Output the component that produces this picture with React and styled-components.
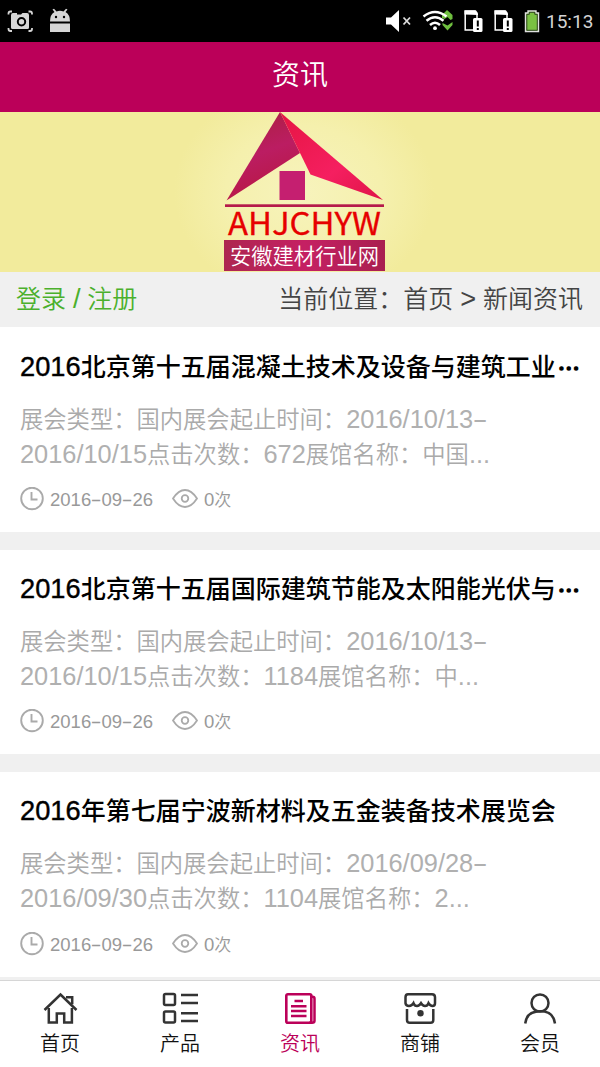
import React from "react";
import styled, { createGlobalStyle } from "styled-components";

const BRAND = "#bb0059";

const GlobalStyle = createGlobalStyle`
  * { box-sizing: border-box; }
  body {
    margin: 0;
    background: #f0f0f0;
    font-family: "Noto Sans CJK SC", sans-serif;
    font-weight: 350;
    color: #000;
  }
`;

const Screen = styled.div`
  width: 600px;
  height: 1067px;
  display: flex;
  flex-direction: column;
  overflow: hidden;
`;

const StatusBar = styled.div`
  height: 42px;
  flex: none;
  background: #000;
  display: flex;
  justify-content: space-between;
  svg { display: block; }
`;

const StatusRight = styled.div`
  display: flex;
`;

const Clock = styled.div`
  width: 54px;
  line-height: 43px;
  font-family: Roboto, sans-serif;
  font-weight: 400;
  font-size: 19px;
  color: #d4d4d4;
  white-space: nowrap;
`;

const Header = styled.header`
  height: 70px;
  flex: none;
  background: ${BRAND};
  color: #fff;
  font-size: 28px;
  line-height: 62px;
  text-align: center;
`;

const Banner = styled.div`
  height: 160px;
  flex: none;
  display: flex;
  justify-content: center;
  padding-left: 8px;
  background: radial-gradient(ellipse 130px 110px at 304px 80px, #f7f3bc 0%, #f5f0ad 60%, #f2eb9c 100%);
  svg { display: block; }
`;

const Crumbs = styled.div`
  height: 55px;
  flex: none;
  display: flex;
  justify-content: space-between;
  padding: 0 17px 0 16px;
  font-size: 25px;
  line-height: 51px;
  word-spacing: 1.3px;
  color: #444;
  white-space: nowrap;
`;

const Login = styled.a`
  color: #4bb02c;
`;

const List = styled.main`
  flex: 1;
  min-height: 0;
  overflow: hidden;
  display: flex;
  flex-direction: column;
  gap: 18px;
`;

const Card = styled.article`
  flex: none;
  height: ${(p) => p.$height}px;
  padding: ${(p) => p.$top}px 20px 0;
  background: #fff;
`;

const Title = styled.h2`
  margin: 0;
  height: 40px;
  line-height: 40px;
  font-size: 25px;
  font-weight: 500;
  white-space: nowrap;
`;

const Ellipsis = styled.span`
  font-size: 22px;
  line-height: 1;
  margin-left: 2px;
  -webkit-text-stroke: 1.3px #000;
`;

const Summary = styled.p`
  margin: 16px 0 0;
  font-size: 23.3px;
  line-height: 35px;
  height: 70px;
  color: #aaa;
  white-space: nowrap;
`;

const Line = styled.span`
  display: block;
  height: 35px;
`;

const Latin = styled.span`
  font-family: "Liberation Sans", sans-serif;
  font-weight: 400;
  font-size: 1.09em;
  line-height: 1;
  ${Title} & { -webkit-text-stroke: 0.4px #000; }
  ${Summary} & { color: #b0b0b0; }
`;

const Dash = styled.span`
  display: inline-block;
  width: 0.556em;
  text-align: center;
  transform: scaleX(1.8);
`;

const Meta = styled.div`
  margin-top: ${(p) => p.$gap}px;
  display: flex;
  align-items: center;
  height: 26px;
  font-size: 17px;
  line-height: 26px;
  color: #999;
  svg { flex: none; display: block; }
`;

const MetaText = styled.span`
  margin: 0 19px 0 6px;
  white-space: nowrap;
`;

const TabBar = styled.nav`
  height: 87px;
  flex: none;
  display: grid;
  grid-template-columns: repeat(5, 1fr);
  background: #fff;
  border-top: 1px solid #d6d6d6;
`;

const Tab = styled.a`
  display: flex;
  flex-direction: column;
  align-items: center;
  padding-top: 10px;
  font-size: 20px;
  line-height: 31px;
  color: ${(p) => (p.$active ? BRAND : "#111")};
  svg { display: block; color: ${(p) => (p.$active ? BRAND : "#333")}; }
`;

/* Sets digits and punctuation in the Latin face and widens hyphens. */
function Mixed({ children }) {
  return children.split(/([0-9/.>\-]+|⋯)/).map((run, i) => {
    if (i % 2 === 0) return run;
    if (run === "⋯") return <Ellipsis key={i}>⋯</Ellipsis>;
    return (
      <Latin key={i}>
        {run.split(/(-)/).map((t, j) => (t === "-" ? <Dash key={j}>-</Dash> : t))}
      </Latin>
    );
  });
}

const StatusLeftIcons = () => (
  <svg width="80" height="42" viewBox="0 0 80 42">
    <g fill="none" stroke="#d6d6d6" strokeWidth="1.8">
      <path d="M8.500 14.500v-1q0-2 2-2h1.500M28.500 11.500h1.500q2 0 2 2v1M32 28v1q0 2-2 2h-1.500M12 31h-1.500q-2 0-2-2v-1" />
    </g>
    <path fill="#d6d6d6" d="M13 13h4v1.500h4l1.500-1.500h4.500q2 0 2 2v12.500q0 1.500-1.500 1.500h-15q-1.500 0-1.500-1.500v-12.500q0-2 2-2z" />
    <circle cx="21.500" cy="21.700" r="3.700" fill="#d6d6d6" stroke="#000" strokeWidth="2" />
    <path fill="#d6d6d6" d="M50 23.500v8.500h20v-8.500zM50 21.500q0-7 4.500-9.500l-2-2.500 1.500-.8 2.500 2.700q3.500-1.500 7 0l2.500-2.700 1.500.8-2 2.500q4.500 2.500 4.500 9.500z" />
    <circle cx="56" cy="17" r="1.200" fill="#000" />
    <circle cx="64" cy="17" r="1.200" fill="#000" />
  </svg>
);

const Sim = ({ x }) => (
  <g transform={`translate(${x} 0)`}>
    <path d="M13 18v-5l-1.500-2H1.200v19H9" fill="none" stroke="#fff" strokeWidth="1.500" />
    <path d="M.5 14.500v-4H11l3 3.500v1z" fill="#fff" />
    <rect x="9" y="18" width="9.500" height="14" rx="1.500" fill="#fff" />
    <path d="M13.800 20.500v6M13.800 28v2" stroke="#000" strokeWidth="2" />
  </g>
);

const StatusRightIcons = () => (
  <svg width="161" height="42" viewBox="385 0 161 42">
    <path d="M386 17.500h5l8-7.500v22l-8-7.500h-5z" fill="#fff" />
    <path d="M403.500 17.500l6.500 7M410 17.500l-6.500 7" stroke="#ddd" strokeWidth="1.800" />
    <path d="M442 18v-3l5-5 5.500 5v4l-2 1-3-3-3 2zM442.500 23l5 2.500 5-3.500v3l-5 5.500-5-5.500z" fill="#6fbf3f" />
    <g fill="none" stroke="#fff" strokeWidth="2.500">
      <path d="M423.500 16.500q11.500-9 23 0M426.500 20.800q8.500-7 17 0M430 25q5-4.500 10 0" />
    </g>
    <circle cx="435" cy="28.200" r="1.900" fill="#fff" />
    <Sim x={464} />
    <Sim x={494} />
    <path d="M525.500 13h2.500v-2h8v2h2.500v18.500h-13z" fill="#7ac142" stroke="#e0e0e0" strokeWidth="1.400" />
    <path d="M526.800 14.300h2.500v-2h5.500v2h2.500v16h-10.500z" fill="none" stroke="#111" strokeWidth=".7" />
  </svg>
);

const Logo = () => (
  <svg width="164" height="160" viewBox="222 112 164 160">
    <defs>
      <linearGradient id="roof" x1="0" y1="0" x2=".3" y2="1">
        <stop offset="0" stopColor="#a8203a" />
        <stop offset=".55" stopColor="#bb1d62" />
        <stop offset="1" stopColor="#b81745" />
      </linearGradient>
      <linearGradient id="plate" x1="0" y1="0" x2="1" y2="0">
        <stop offset="0" stopColor="#ad2650" />
        <stop offset=".5" stopColor="#c52063" />
        <stop offset="1" stopColor="#a91f50" />
      </linearGradient>
      <linearGradient id="wing" x1="0" y1="0" x2="1" y2="1">
        <stop offset="0" stopColor="#e61543" />
        <stop offset=".6" stopColor="#f51f60" />
        <stop offset="1" stopColor="#df1447" />
      </linearGradient>
    </defs>
    <path d="M280 112L226.500 200.500 300 153z" fill="url(#roof)" />
    <path d="M280 112L383 200 310.500 174.500z" fill="url(#wing)" />
    <rect x="279.500" y="171" width="25.500" height="29" fill="#c51f70" />
    <rect x="225" y="204.300" width="159" height="2.700" fill="#b51a4b" />
    <text x="228" y="234.800" textLength="153" lengthAdjust="spacingAndGlyphs" fontFamily="Noto Sans CJK SC, sans-serif" fontWeight="400" fontSize="31" fill="#e60000" stroke="#e60000" strokeWidth=".3">AHJCHYW</text>
    <rect x="224" y="240" width="161" height="31" fill="url(#plate)" />
    <text x="230" y="263.500" textLength="149" lengthAdjust="spacingAndGlyphs" fontFamily="Noto Sans CJK SC, sans-serif" fontWeight="350" fontSize="21.300" fill="#fff">安徽建材行业网</text>
  </svg>
);

const ClockIcon = () => (
  <svg width="24" height="24" viewBox="0 0 24 24" fill="none" stroke="#aaa">
    <circle cx="12" cy="11.500" r="10.800" strokeWidth="1.900" />
    <path d="M11.500 5v7.500h6" strokeWidth="1.900" />
  </svg>
);

const EyeIcon = () => (
  <svg width="26" height="24" viewBox="0 0 26 24" fill="none" stroke="#aaa" strokeWidth="1.800">
    <path d="M1 11.500Q6.500 3 13 3T25 11.500Q19.500 20 13 20T1 11.500z" />
    <circle cx="13" cy="11.500" r="3.300" />
  </svg>
);

const icons = {
  home: (
    <>
      <path d="M2.500 19L18.500 3.500 34.500 19" />
      <path d="M24 6.300h6.200v7" />
      <path d="M6.800 17v14.500h8v-9h7.400v9h7.700V17" />
    </>
  ),
  grid: (
    <>
      <rect x="2" y="3" width="11" height="11" rx="1.500" />
      <rect x="2" y="20.500" width="11" height="11" rx="1.500" />
      <path d="M19 4h17M19 12h17M19 22.300h17M19 30h17" />
    </>
  ),
  news: (
    <>
      <rect x="4.300" y="3.300" width="25" height="28.500" rx="1.500" strokeWidth="2.600" />
      <path d="M29 5.800h1.500q2 0 2 2v22q0 2-2.500 2h-3" />
      <path d="M12.500 10h8.500M9 15.200h15.500M9 20h15.500M9 25h15.500" />
    </>
  ),
  shop: (
    <>
      <path d="M6 3.200h24q3 0 3 3v6q0 2.700-2.500 2.700t-4-2.700q-1 2.700-3.500 2.700t-4-2.700q-1.500 2.700-4 2.700t-3.500-2.700q-1.500 2.700-4.500 2.700t-3.500-2.700v-6q0-3 2.500-3z" />
      <path d="M5 18v11q0 2.800 2.800 2.800h20.700q2.800 0 2.800-2.800V18" />
      <circle cx="18.500" cy="22.200" r="3.200" fill="currentColor" stroke="none" />
    </>
  ),
  user: (
    <>
      <circle cx="18" cy="12" r="8.500" />
      <path d="M3.200 32.500Q4.500 20.500 18 20.300T33 32.500" />
    </>
  ),
};

const TabIcon = ({ name }) => (
  <svg width="36" height="36" viewBox="0 0 36 36" fill="none" stroke="currentColor" strokeWidth="2.500">
    {icons[name]}
  </svg>
);

const articles = [
  {
    title: "2016北京第十五届混凝土技术及设备与建筑工业⋯",
    lines: ["展会类型：国内展会起止时间：2016/10/13-", "2016/10/15点击次数：672展馆名称：中国..."],
    height: 205,
    top: 18,
    gap: 15,
  },
  {
    title: "2016北京第十五届国际建筑节能及太阳能光伏与⋯",
    lines: ["展会类型：国内展会起止时间：2016/10/13-", "2016/10/15点击次数：1184展馆名称：中..."],
    height: 204,
    top: 17,
    gap: 15,
  },
  {
    title: "2016年第七届宁波新材料及五金装备技术展览会",
    lines: ["展会类型：国内展会起止时间：2016/09/28-", "2016/09/30点击次数：1104展馆名称：2..."],
    height: 205,
    top: 17,
    gap: 16,
  },
];

const tabs = [
  ["home", "首页"],
  ["grid", "产品"],
  ["news", "资讯"],
  ["shop", "商铺"],
  ["user", "会员"],
];

export default function App() {
  return (
    <Screen>
      <GlobalStyle />
      <StatusBar>
        <StatusLeftIcons />
        <StatusRight>
          <StatusRightIcons />
          <Clock>15:13</Clock>
        </StatusRight>
      </StatusBar>
      <Header>资讯</Header>
      <Banner>
        <Logo />
      </Banner>
      <Crumbs>
        <Login><Mixed>登录 / 注册</Mixed></Login>
        <span><Mixed>当前位置：首页 &gt; 新闻资讯</Mixed></span>
      </Crumbs>
      <List>
        {articles.map((a) => (
          <Card key={a.title} $height={a.height} $top={a.top}>
            <Title><Mixed>{a.title}</Mixed></Title>
            <Summary>
              {a.lines.map((l) => (
                <Line key={l}><Mixed>{l}</Mixed></Line>
              ))}
            </Summary>
            <Meta $gap={a.gap}>
              <ClockIcon />
              <MetaText><Mixed>2016-09-26</Mixed></MetaText>
              <EyeIcon />
              <MetaText><Mixed>0次</Mixed></MetaText>
            </Meta>
          </Card>
        ))}
      </List>
      <TabBar>
        {tabs.map(([name, label]) => (
          <Tab key={name} $active={name === "news"}>
            <TabIcon name={name} />
            {label}
          </Tab>
        ))}
      </TabBar>
    </Screen>
  );
}
